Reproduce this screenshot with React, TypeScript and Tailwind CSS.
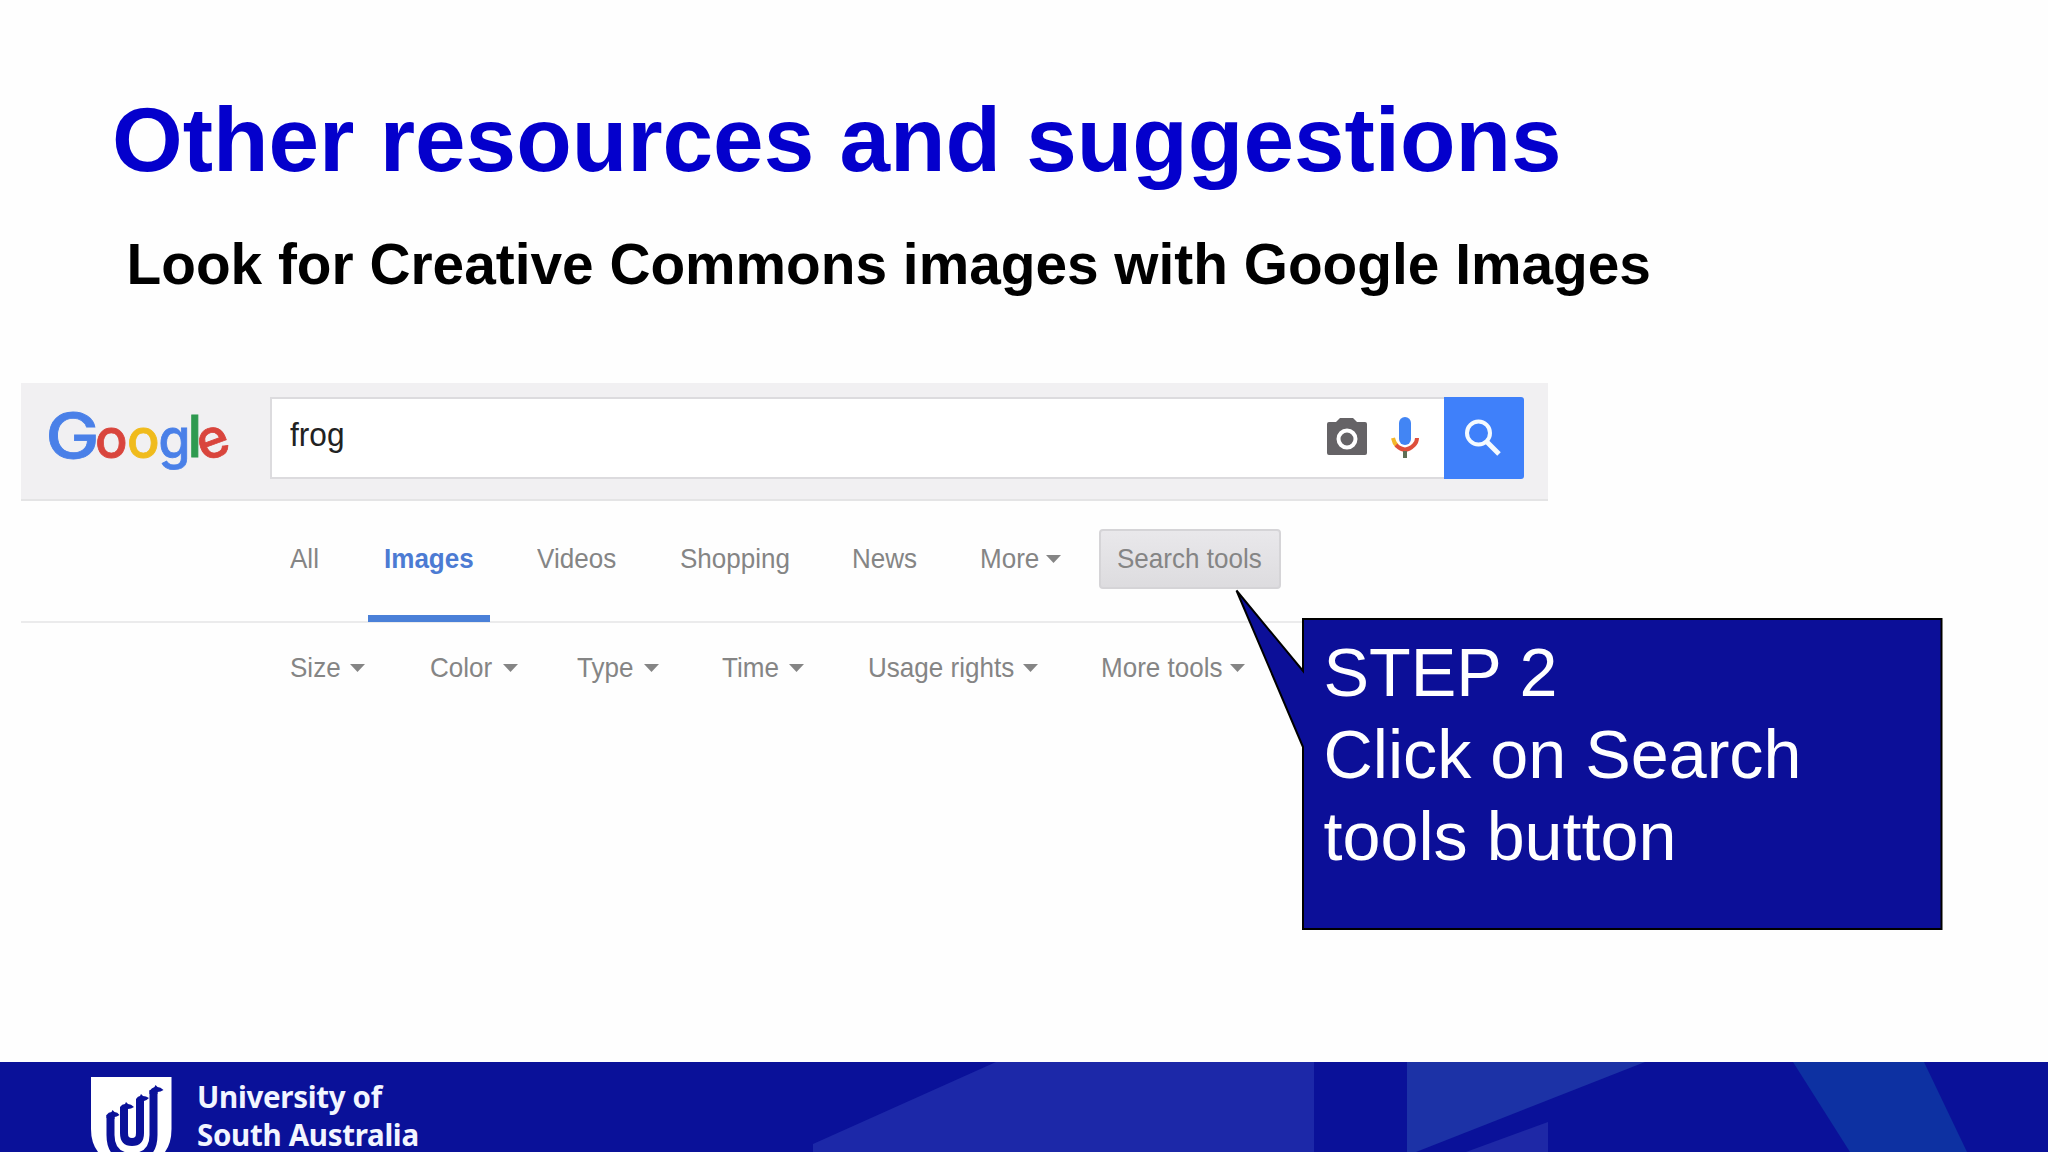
import { ReactNode } from "react";

const filters = ["Size", "Color", "Type", "Time", "Usage rights", "More tools"];

function Caret() {
  return (
    <svg className="h-2 w-[15px] shrink-0" viewBox="0 0 15 8">
      <path d="M0 0h15L7.5 8z" fill="#858585" />
    </svg>
  );
}

// narrow label, condensed a little horizontally
function Label({ children, className = "" }: { children: ReactNode; className?: string }) {
  return (
    <span className={`inline-block origin-left scale-x-[0.93] whitespace-nowrap ${className}`}>
      {children}
    </span>
  );
}

function GoogleLogo() {
  return (
    <svg
      className="h-[90px] w-[200px] overflow-visible font-['Inter',sans-serif] font-medium"
      viewBox="40 390 200 90"
      aria-label="Google"
      strokeWidth="0.8"
    >
      <text x="45.500" y="457.500" fontSize="62" fill="#4a80e8" stroke="#4a80e8" textLength="54" lengthAdjust="spacingAndGlyphs">G</text>
      <text x="95" y="457.500" fontSize="54" fill="#d9453d" stroke="#d9453d">o</text>
      <text x="127" y="457.500" fontSize="54" fill="#f0bb1c" stroke="#f0bb1c">o</text>
      <text x="158.500" y="457.500" fontSize="54" fill="#4a80e8" stroke="#4a80e8" textLength="32" lengthAdjust="spacingAndGlyphs">g</text>
      <text x="187.500" y="456.500" fontSize="58" fill="#2f9a50" stroke="#2f9a50">l</text>
      <text x="197" y="457.500" fontSize="54" fill="#d9453d" stroke="#d9453d" transform="rotate(-20 213 442)">e</text>
    </svg>
  );
}

function SearchBar() {
  return (
    <div className="flex h-[118px] border-b-2 border-[#e4e4e5] bg-[#f1f0f2] pt-[14px]">
      <div className="-mt-[7px] w-[249px] pl-[19px]">
        <GoogleLogo />
      </div>
      <div className="flex h-[82px] w-[1174px] items-center border-2 border-r-0 border-[#dcdbde] bg-white pl-[18px]">
        <Label className="mb-2 grow text-[34px] leading-none text-[#222]">frog</Label>
        <svg className="-mt-0.5 h-[38px] w-[42px]" viewBox="0 0 42 38">
          <path d="M14 0h13l4 4h8q2 0 2 2v29q0 2-2 2H3q-2 0-2-2V6q0-2 2-2h7z" fill="#656366" />
          <circle cx="21" cy="21" r="8.5" fill="none" stroke="#fff" strokeWidth="4" />
        </svg>
        <svg className="mr-[24px] ml-[22px] h-[42px] w-[30px]" viewBox="0 0 30 42">
          <rect x="9" y="0" width="12" height="28" rx="6" fill="#4285f4" />
          <path d="M3 21q1 5 4 8" fill="none" stroke="#f4b72a" strokeWidth="4" />
          <path d="M6 28q9 9 18 0q3-3 3-7" fill="none" stroke="#de4f3c" strokeWidth="4" />
          <path d="M15 34v7" stroke="#5f6f55" strokeWidth="4" />
        </svg>
      </div>
      <button className="flex h-[82px] w-[80px] items-center justify-center rounded-r-[3px] bg-[#3f80fa]">
        <svg className="-ml-0.5 h-[38px] w-[38px]" viewBox="0 0 38 38" fill="none" stroke="#f4faff">
          <circle cx="14.500" cy="14" r="11.5" strokeWidth="4" />
          <path d="M22.5 22.5L35 35" strokeWidth="5" />
        </svg>
      </button>
    </div>
  );
}

function Tabs() {
  return (
    <div className="grid h-[122px] grid-cols-[78px_153px_143px_172px_128px_135px_182px] border-b-2 border-[#ebebec] pl-[269px] text-[28px] leading-[60px] text-[#858585]">
      <Label className="mt-[28px]">All</Label>
      <div className="h-[121px] w-[122px] border-b-[7px] border-[#4a80d8] pt-[28px] pl-4">
        <Label className="font-bold text-[#4c7bd3]">Images</Label>
      </div>
      <Label className="mt-[28px] ml-4">Videos</Label>
      <Label className="mt-[28px] ml-4">Shopping</Label>
      <Label className="mt-[28px] ml-4">News</Label>
      <div className="mt-[28px] ml-4 flex h-[60px] items-center">
        <span className="w-[66px]"><Label>More</Label></span>
        <Caret />
      </div>
      <button className="mt-[28px] h-[60px] rounded-[4px] border-2 border-[#d5d4d7] bg-linear-to-b from-[#e9e8eb] to-[#dddcdf] pl-4 text-left leading-[56px]">
        <Label>Search tools</Label>
      </button>
    </div>
  );
}

function FilterRow() {
  return (
    <div className="grid grid-cols-[140px_147px_145px_146px_233px_160px] pt-[15px] pl-[269px] text-[28px] leading-[60px] text-[#858585]">
      {filters.map((name) => (
        <div key={name} className="flex items-center">
          <Label>{name}</Label>
          <span className={name.includes(" ") ? "-ml-0.5" : "w-1.5"} />
          <Caret />
        </div>
      ))}
    </div>
  );
}

function Callout() {
  return (
    <div className="absolute top-[588px] left-[1234px] h-[344px] w-[710px]">
      <svg className="absolute inset-0 h-full w-full" viewBox="1234 588 710 344">
        <path
          d="M1303 619H1941.500V929H1303V747L1236.500 590.500L1303 671Z"
          fill="#0c0f98"
          stroke="#000"
          strokeWidth="2"
        />
      </svg>
      <p className="relative pt-[43px] pl-[89.500px] text-[68.27px] leading-[82px] text-white">
        STEP 2
        <br />
        Click on Search
        <br />
        tools button
      </p>
    </div>
  );
}

function Footer() {
  return (
    <footer className="relative h-[90px] overflow-hidden bg-[#0a1199]">
      <svg className="absolute inset-0 h-full w-full" viewBox="0 1062 2048 90">
        <path d="M996 1062H1314V1152H813V1144Z" fill="#1c28a8" />
        <path d="M1407 1062H1645L1416 1152H1407Z" fill="#1c32a6" />
        <path d="M1548 1122V1152H1466Z" fill="#1e28a6" />
        <path d="M1793 1062H1924L1967 1152H1850Z" fill="#0d31a2" />
      </svg>
      <div className="relative flex pl-[91px]">
        <svg className="mt-[15px] h-[75px] w-[81px]" viewBox="91 1077 81 75">
          <path d="M91 1077h80.500v52q0 14-6.500 23H98q-7-9-7-23z" fill="#fff" />
          {/* four birds forming two nested U shapes */}
          <g fill="none" stroke="#0a1199" strokeWidth="8">
            <path d="M110.500 1115v20q0 22 21.500 22t21.500-22V1090" />
            <path d="M124 1108v25q0 9 8 9t8-9V1099" />
          </g>
          <g fill="#0a1199">
            <path d="M106.500 1118v-3q2-3 5-3l1-2 2 2q3 0 5 3-3 2-5 2v2z" />
            <path d="M120 1110v-3q2-3 5-3l1-2 2 2q3 0 6 3-3 2-6 2v2z" />
            <path d="M136 1102v-3q2-3 4-3l1-2 2 2q3 0 6 2-3 3-5 3v2z" />
            <path d="M149.500 1094v-3q2-3 5-4l1-2 2 2q3 0 6 3-3 2-6 2v2z" />
          </g>
        </svg>
        <p className="pt-4 pl-[25px] font-['Noto_Sans',sans-serif] text-[29.500px] leading-[37.500px] font-bold tracking-[-0.3px] text-[#f2f5ff]">
          University of
          <br />
          South Australia
        </p>
      </div>
    </footer>
  );
}

export default function App() {
  return (
    <div className="relative flex h-[1152px] w-[2048px] flex-col overflow-hidden bg-[#fefefe] font-['Liberation_Sans',Arial,sans-serif]">
      <h1 className="pt-[87px] pl-[112px] text-[90.900px] leading-[105px] font-bold text-[#0400cc]">
        Other resources and suggestions
      </h1>
      <h2 className="mt-[40px] pl-[126.500px] text-[56.800px] leading-[65px] font-bold text-black">
        Look for Creative Commons images with Google Images
      </h2>
      <main className="mt-[86px] ml-[21px] w-[1527px] grow">
        <SearchBar />
        <Tabs />
        <FilterRow />
      </main>
      <Callout />
      <Footer />
    </div>
  );
}
